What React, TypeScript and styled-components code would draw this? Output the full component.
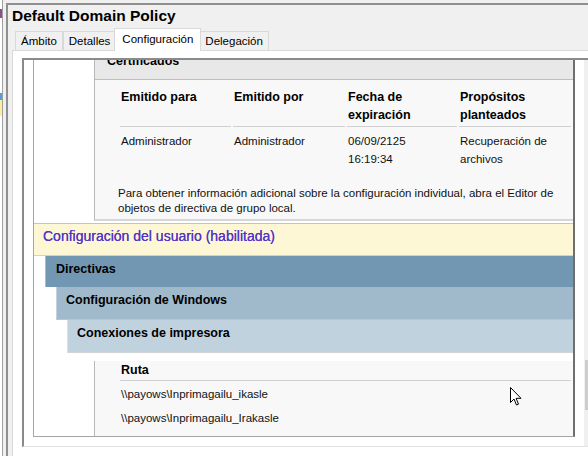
import React from 'react';
import styled, { createGlobalStyle } from 'styled-components';

/* ─── Global ────────────────────────────────────────────────── */

const GlobalStyle = createGlobalStyle`
  html, body {
    margin: 0;
    padding: 0;
  }
  body {
    background: #f0f0f0;
    font-family: "Liberation Sans", Arial, sans-serif;
    color: #000;
  }
`;

/* ─── Window chrome ─────────────────────────────────────────── */

const Screen = styled.div`
  position: relative;
  display: flex;
  width: 588px;
  height: 456px;
  overflow: hidden;
  background: #f0f0f0;
`;

const SidePane = styled.div`
  flex: none;
  width: 2px;
  margin-right: 3px;
  display: flex;
  flex-direction: column;
  background: #fff;
  border-right: 1px solid #a0a0a0;
`;

const SideBit = styled.span<{ $color: string; $gap: number; $h: number }>`
  display: block;
  margin-top: ${(p) => p.$gap}px;
  height: ${(p) => p.$h}px;
  background: ${(p) => p.$color};
`;

const Window = styled.div`
  flex: 1;
  min-width: 0;
  margin-top: 3px;
  padding-left: 4px;
  display: flex;
  flex-direction: column;
  border-top: 2px solid #8f8f8f;
  border-left: 2px solid #8f8f8f;
`;

const Title = styled.h1`
  margin: 2px 0 0;
  font-size: 15.5px;
  line-height: 18px;
  font-weight: bold;
  white-space: nowrap;
`;

const TabStrip = styled.div`
  position: relative;
  z-index: 1;
  display: flex;
  align-items: flex-end;
  height: 22px;
  margin-top: 3px;
  padding-left: 3px;
`;

const Tab = styled.div<{ $active?: boolean }>`
  position: relative;
  z-index: ${(p) => (p.$active ? 2 : 1)};
  box-sizing: border-box;
  height: ${(p) => (p.$active ? 23 : 19)}px;
  margin: ${(p) => (p.$active ? '0 -2px -1px' : '0')};
  padding: 0 ${(p) => (p.$active ? 7 : 5)}px;
  border: 1px solid #d9d9d9;
  border-bottom: none;
  background: ${(p) => (p.$active ? '#fff' : '#f0f0f0')};
  font-size: 11.5px;
  line-height: ${(p) => (p.$active ? 20 : 18)}px;
  white-space: nowrap;
`;

const Page = styled.div`
  flex: 1;
  padding: 7px 0 0 9px;
  background: #fff;
  border-top: 1px solid #d9d9d9;
  border-left: 1px solid #d9d9d9;
`;

/* ─── Report viewport ───────────────────────────────────────── */

const Viewport = styled.div`
  display: flex;
  width: 577px;
  height: 386px;
  background: #fff;
  border-top: 2px solid #8a8a8a;
  border-left: 2px solid #8a8a8a;
  border-bottom: 1px solid #e3e3e3;
`;

// scrolled to the end: content sits on the bottom edge, the top is cut off
const DocArea = styled.div`
  flex: none;
  box-sizing: border-box;
  width: 560px;
  padding: 0 9px 9px;
  display: flex;
  flex-direction: column;
  justify-content: flex-end;
  overflow: hidden;
`;

const Scrollbar = styled.div`
  flex: none;
  width: 17px;
  display: flex;
  flex-direction: column;
  background: #f0f0f0;
`;

const ScrollButton = styled.div`
  height: 17px;
`;

const ScrollTrack = styled.div`
  flex: 1;
  display: flex;
  flex-direction: column;
  justify-content: flex-end;
  padding-bottom: 19px;
`;

const Thumb = styled.div`
  height: 50px;
  margin: 0 2px 0 1px;
  background: #cdcdcd;
`;

const Report = styled.div`
  flex: none;
  border-left: 1px solid #a5a5a5;
  border-right: 2px solid #6f6f6f;
  border-bottom: 1px solid #a5a5a5;
`;

/* ─── Report parts ──────────────────────────────────────────── */

const InfoBox = styled.div<{ $closed?: boolean }>`
  margin-left: 60px;
  background: #f8f8f8;
  border-left: 1px solid #b8b8b8;
  ${(p) => (p.$closed ? 'border-bottom: 2px solid #d6d6d6; margin-bottom: 2px;' : '')}
`;

const BoxHeader = styled.div`
  height: 36px;
  padding-left: 12px;
  background: #e8e8e8;
  border-bottom: 1px solid #bdbdbd;
  font-size: 12.5px;
  font-weight: bold;
  line-height: 36px;
`;

const Grid = styled.div<{ $cols: string; $top: number }>`
  display: grid;
  grid-template-columns: ${(p) => p.$cols};
  column-gap: 2px;
  margin: ${(p) => p.$top}px 2px 0 25px;
`;

const HeadCell = styled.div<{ $lh: number; $padBottom: number }>`
  padding: 0 0 ${(p) => p.$padBottom}px 1px;
  border-bottom: 1px solid #d0d0d0;
  font-size: 12.5px;
  font-weight: bold;
  line-height: ${(p) => p.$lh}px;
`;

const DataCell = styled.div<{ $pad: string }>`
  padding: ${(p) => p.$pad};
  padding-left: 1px;
  font-size: 11.5px;
  line-height: 18px;
  color: #111;
  white-space: nowrap;
`;

const Note = styled.p`
  margin: 18px 0 0;
  padding: 0 0 3px 23px;
  font-size: 11.5px;
  line-height: 15px;
  color: #111;
`;

const BoxFoot = styled.div`
  height: 7px;
`;

const UserHeader = styled.div`
  height: 31px;
  padding: 0 0 0 9px;
  background: #fef7d6;
  border-top: 1px solid #c4c4c4;
  border-bottom: 1px solid #d2d2d2;
  color: #5236c8;
  font-size: 14px;
  box-sizing: content-box;
`;

const UserHeaderText = styled.div`
  padding-top: 3px;
  line-height: 18px;
  text-shadow: 0 0 0.4px #5236c8;
`;

const Band = styled.div<{ $level: number; $bg: string; $h: number; $line?: string }>`
  margin-left: ${(p) => p.$level * 11}px;
  height: ${(p) => p.$h}px;
  padding-left: ${(p) => (p.$level === 1 ? 10 : 9)}px;
  background: ${(p) => p.$bg};
  border-left: 1px solid rgba(255, 255, 255, 0.35);
  ${(p) => (p.$line ? `border-bottom: 1px solid ${p.$line};` : '')}
  font-size: 12.5px;
  font-weight: bold;
`;

const BandText = styled.div`
  padding-top: 4px;
  line-height: 18px;
`;

const Cursor = styled.svg`
  position: absolute;
  left: 510px;
  top: 387px;
`;

/* ─── Data ──────────────────────────────────────────────────── */

const certHeaders = [['Emitido para'], ['Emitido por'], ['Fecha de', 'expiración'], ['Propósitos', 'planteados']];
const certRow = [['Administrador'], ['Administrador'], ['06/09/2125', '16:19:34'], ['Recuperación de', 'archivos']];
const printers = ['\\\\payows\\Inprimagailu_ikasle', '\\\\payows\\Inprimagailu_Irakasle'];

const lines = (parts: string[]) =>
  parts.map((t, i) => (
    <React.Fragment key={t}>
      {i > 0 && <br />}
      {t}
    </React.Fragment>
  ));

/* ─── Component ─────────────────────────────────────────────── */

export default function App() {
  return (
    <>
      <GlobalStyle />
      <Screen>
        <SidePane>
          <SideBit $color="#8c4f8c" $gap={9} $h={9} />
          <SideBit $color="#4aa3df" $gap={75} $h={7} />
          <SideBit $color="#fbeea0" $gap={0} $h={16} />
        </SidePane>

        <Window>
          <Title>Default Domain Policy</Title>
          <TabStrip>
            <Tab>Ámbito</Tab>
            <Tab>Detalles</Tab>
            <Tab $active>Configuración</Tab>
            <Tab>Delegación</Tab>
          </TabStrip>

          <Page>
            <Viewport>
              <DocArea>
                <Report>
                  {/* ── Certificados (mostly scrolled away) ── */}
                  <InfoBox $closed>
                    <BoxHeader>Certificados</BoxHeader>
                    <Grid $cols="111px 112px 110px 112px" $top={8}>
                      {certHeaders.map((h) => (
                        <HeadCell key={h[0]} $lh={18} $padBottom={2}>{lines(h)}</HeadCell>
                      ))}
                      {certRow.map((c, i) => (
                        <DataCell key={i} $pad="5px 0 0">{lines(c)}</DataCell>
                      ))}
                    </Grid>
                    <Note>
                      Para obtener información adicional sobre la configuración individual, abra el Editor de
                      objetos de directiva de grupo local.
                    </Note>
                  </InfoBox>

                  {/* ── Configuración del usuario ── */}
                  <UserHeader>
                    <UserHeaderText>Configuración del usuario (habilitada)</UserHeaderText>
                  </UserHeader>
                  <Band $level={1} $bg="#7197b3" $h={31}>
                    <BandText>Directivas</BandText>
                  </Band>
                  <Band $level={2} $bg="#a0bacb" $h={32} $line="#b7c6d1">
                    <BandText>Configuración de Windows</BandText>
                  </Band>
                  <Band $level={3} $bg="#c0d2de" $h={32} $line="#d3d3d3">
                    <BandText>Conexiones de impresora</BandText>
                  </Band>

                  <InfoBox>
                    <Grid $cols="1fr" $top={8}>
                      <HeadCell $lh={19} $padBottom={0}>Ruta</HeadCell>
                      {printers.map((p) => (
                        <DataCell key={p} $pad="4px 0 2px">{p}</DataCell>
                      ))}
                    </Grid>
                    <BoxFoot />
                  </InfoBox>
                </Report>
              </DocArea>

              <Scrollbar>
                <ScrollButton />
                <ScrollTrack>
                  <Thumb />
                </ScrollTrack>
                <ScrollButton />
              </Scrollbar>
            </Viewport>
          </Page>
        </Window>

        <Cursor width="12" height="19" viewBox="0 0 12 19">
          <path
            d="M0.5 0.5 L0.5 15.5 L4 12 L6.5 18 L8.5 17.2 L6.1 11.3 L11 11.3 Z"
            fill="#fff"
            stroke="#000"
            strokeWidth="1"
            strokeLinejoin="miter"
          />
        </Cursor>
      </Screen>
    </>
  );
}
